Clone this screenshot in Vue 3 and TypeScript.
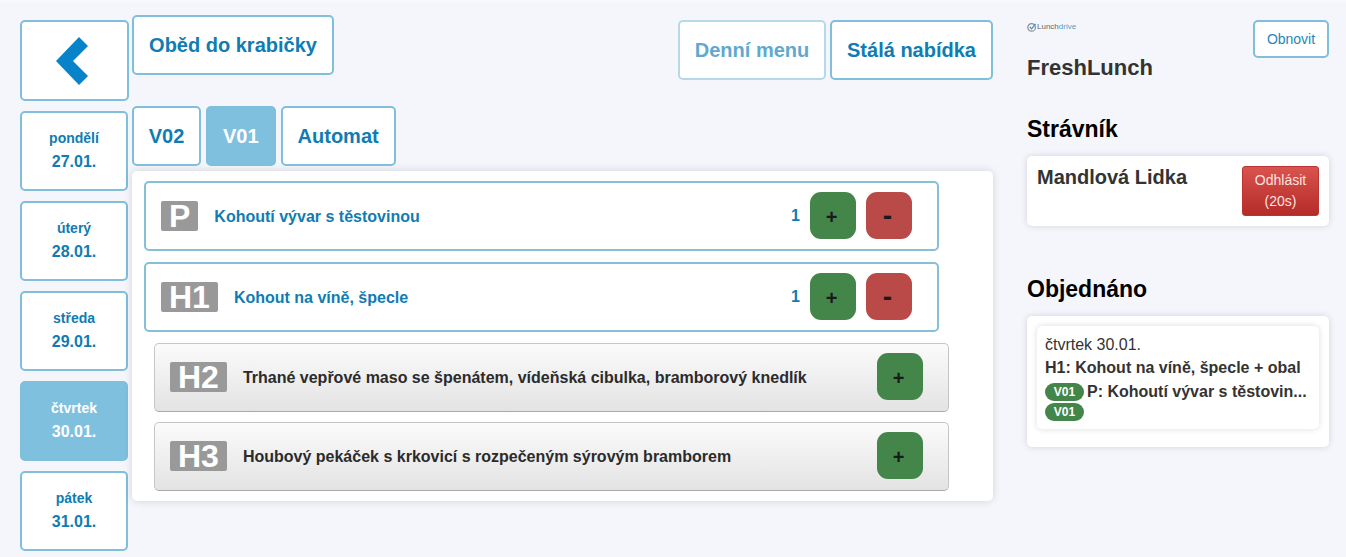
<script setup lang="ts">
const days = [
  { name: 'pondělí', date: '27.01.', active: false },
  { name: 'úterý', date: '28.01.', active: false },
  { name: 'středa', date: '29.01.', active: false },
  { name: 'čtvrtek', date: '30.01.', active: true },
  { name: 'pátek', date: '31.01.', active: false },
];

const tabs = [
  { name: 'V02', active: false },
  { name: 'V01', active: true },
  { name: 'Automat', active: false },
];

const ordered = [
  { code: 'P', text: 'Kohoutí vývar s těstovinou', count: 1 },
  { code: 'H1', text: 'Kohout na víně, špecle', count: 1 },
];

const available = [
  { code: 'H2', text: 'Trhané vepřové maso se špenátem, vídeňská cibulka, bramborový knedlík' },
  { code: 'H3', text: 'Houbový pekáček s krkovicí s rozpečeným sýrovým bramborem' },
];
</script>

<template>
  <div class="page">
    <aside class="days">
      <button class="box back">
        <svg class="chevron" width="32" height="48" viewBox="0 0 32 48">
          <path d="M23 0 L32 9 L17 24 L32 39 L23 48 L0 24 Z" fill="#0784c9" />
        </svg>
      </button>
      <button v-for="d in days" :key="d.date" class="box day" :class="{ active: d.active }">
        <span class="day-name">{{ d.name }}</span>
        <span class="day-date">{{ d.date }}</span>
      </button>
    </aside>

    <main class="main">
      <div class="top">
        <button class="box big lunchbox">Oběd do krabičky</button>
        <div class="menus">
          <button class="box big faded">Denní menu</button>
          <button class="box big">Stálá nabídka</button>
        </div>
      </div>
      <div class="tabs">
        <button v-for="t in tabs" :key="t.name" class="box big tab" :class="{ active: t.active }">{{ t.name }}</button>
      </div>
      <section class="card">
        <div v-for="o in ordered" :key="o.code" class="item">
          <span class="code">{{ o.code }}</span>
          <span class="item-text">{{ o.text }}</span>
          <span class="count">{{ o.count }}</span>
          <button class="act plus">+</button>
          <button class="act minus">-</button>
        </div>
        <div v-for="a in available" :key="a.code" class="item free">
          <span class="code">{{ a.code }}</span>
          <span class="item-text">{{ a.text }}</span>
          <button class="act plus">+</button>
        </div>
      </section>
    </main>

    <aside class="side">
      <div class="side-head">
        <div>
          <div class="logo">
            <svg width="10" height="10" viewBox="0 0 10 10">
              <circle cx="4.6" cy="5.4" r="3.8" fill="none" stroke="#8a8f94" stroke-width="1.2" />
              <path d="M2.8 5 L4.6 6.8 L8.6 1.8" fill="none" stroke="#4a90b8" stroke-width="1.2" />
            </svg>
            <span class="logo-a">Lunch</span><span class="logo-b">drive</span>
          </div>
          <div class="brand">FreshLunch</div>
        </div>
        <button class="refresh">Obnovit</button>
      </div>

      <h2 class="title diner-title">Strávník</h2>
      <div class="panel diner">
        <span class="diner-name">Mandlová Lidka</span>
        <button class="logout">Odhlásit<br />(20s)</button>
      </div>

      <h2 class="title order-title">Objednáno</h2>
      <div class="panel orders">
        <div class="order">
          <div class="order-day">čtvrtek 30.01.</div>
          <div class="order-line">H1: Kohout na víně, špecle + obal</div>
          <div class="order-line"><span class="pill">V01</span>P: Kohoutí vývar s těstovin...</div>
          <div class="pill-row"><span class="pill">V01</span></div>
        </div>
      </div>
    </aside>
  </div>
</template>

<style>
html,
body {
  margin: 0;
  background: #f4f6fb;
}
</style>

<style scoped>
.page {
  display: flex;
  height: 557px;
  box-sizing: border-box;
  overflow: hidden;
  font-family: "Liberation Sans", Arial, sans-serif;
  background: #f4f6fb;
  border-top: 2px solid #f8f9fb;
}

button {
  font-family: inherit;
  cursor: pointer;
}

.box {
  box-sizing: border-box;
  border: 2px solid #7fbfdc;
  border-radius: 5px;
  background: #fff;
  color: #0f7cb3;
  font-weight: 700;
  padding: 0;
  flex-shrink: 0;
}

.box.active {
  background: #7fc0de;
  color: #fff;
}

.days {
  width: 109px;
  margin-left: 20px;
  padding-top: 18px;
  display: flex;
  flex-direction: column;
  flex-shrink: 0;
}

.back {
  height: 81px;
  display: flex;
  align-items: center;
  justify-content: center;
  margin-bottom: 10px;
}

.chevron {
  margin-right: 5px;
}

.day {
  width: 108px;
  height: 80px;
  margin-bottom: 10px;
  display: flex;
  flex-direction: column;
  align-items: center;
  justify-content: center;
  gap: 7px;
  padding: 1px 0 2px;
}

.day-name {
  font-size: 14px;
  line-height: 16px;
}

.day-date {
  font-size: 16px;
  line-height: 18px;
}

.main {
  width: 861px;
  margin-left: 3px;
  padding-top: 13px;
  flex-shrink: 0;
}

.top {
  display: flex;
  justify-content: space-between;
  align-items: flex-start;
  height: 91px;
}

.big {
  height: 60px;
  font-size: 20px;
  padding: 0;
  white-space: nowrap;
}

.lunchbox {
  width: 202px;
}

.menus {
  display: flex;
  gap: 4px;
  margin-top: 5px;
}

.faded {
  color: #5fa9cf;
  border-color: #b5d9ea;
  width: 148px;
}

.menus .big:last-child {
  width: 163px;
}

.tabs {
  display: flex;
  gap: 5px;
}

.tab {
  padding: 0 15px;
}

.tab:first-child {
  padding: 0 14.7px;
}

.card {
  margin-top: 5px;
  background: #fff;
  border-radius: 5px;
  box-shadow: 0 0 8px rgba(0, 0, 0, 0.14);
  padding: 10px 0 10px 12px;
  height: 330px;
  box-sizing: border-box;
}

.item {
  box-sizing: border-box;
  width: 795px;
  height: 70px;
  border: 2px solid #86bfd8;
  border-radius: 5px;
  display: flex;
  align-items: center;
  padding-left: 15px;
  margin-bottom: 11px;
  color: #0f7cb3;
  font-weight: 700;
}

.free {
  height: 69px;
  margin-left: 10px;
  margin-bottom: 10px;
  padding-bottom: 1px;
  border: 1px solid #c6c6c6;
  border-bottom-color: #aaa;
  background: linear-gradient(#fbfbfb, #e3e3e3);
  color: #2b2b2b;
}

.code {
  background: #999;
  color: #fff;
  border-radius: 2px;
  height: 30px;
  line-height: 30px;
  padding: 0 8px;
  font-size: 32px;
  font-weight: 700;
  margin-right: 16px;
  text-align: center;
  flex-shrink: 0;
}

.item-text {
  flex: 1;
  font-size: 16px;
  padding-top: 1px;
}

.count {
  font-size: 16px;
  margin-right: 10px;
}

.act {
  width: 46px;
  height: 47px;
  border: 0;
  border-radius: 11px;
  color: #1a1a1a;
  font-size: 20px;
  font-weight: 700;
  padding: 4px 3px 0 0;
  margin-top: -2px;
}

.plus {
  background: #44864a;
}

.minus {
  background: #b94a48;
  margin-left: 10px;
  margin-right: 25px;
  font-size: 28px;
  padding-top: 2px;
}

.free .act {
  margin-right: 25px;
  margin-top: -1px;
}

.side {
  width: 302px;
  margin-left: 34px;
  flex-shrink: 0;
}

.side-head {
  display: flex;
  justify-content: space-between;
  padding-top: 18px;
  height: 82px;
}

.logo {
  display: flex;
  align-items: center;
  font-size: 8px;
  height: 13px;
}

.logo-a {
  color: #666;
}

.logo-b {
  color: #5b9cc4;
}

.brand {
  margin-top: 22px;
  font-size: 22px;
  font-weight: 700;
  color: #333;
}

.refresh {
  box-sizing: border-box;
  width: 76px;
  height: 38px;
  border: 2px solid #7fbfdc;
  border-radius: 5px;
  background: #fff;
  color: #2487b8;
  font-size: 14px;
  padding: 0;
}

.title {
  margin: 0;
  font-size: 23px;
  line-height: 26px;
  color: #000;
}

.diner-title {
  margin-top: 14px;
}

.panel {
  background: #fff;
  border-radius: 5px;
  box-shadow: 0 0 7px rgba(0, 0, 0, 0.14);
  box-sizing: border-box;
}

.diner {
  margin-top: 14px;
  height: 70px;
  padding: 10px;
  display: flex;
  justify-content: space-between;
  align-items: flex-start;
}

.diner-name {
  font-size: 20px;
  font-weight: 700;
  color: #333;
  line-height: 24px;
  margin-top: -1px;
}

.logout {
  box-sizing: border-box;
  width: 77px;
  height: 50px;
  border: 1px solid #b33;
  border-radius: 3px;
  background: linear-gradient(#d9534f, #b52b27);
  color: #fbe3e0;
  font-size: 14px;
  line-height: 21px;
  padding: 0;
}

.order-title {
  margin-top: 50px;
}

.orders {
  margin-top: 14px;
  height: 131px;
  padding: 10px;
}

.order {
  height: 103px;
  box-sizing: border-box;
  background: #fff;
  border-radius: 5px;
  box-shadow: 0 0 6px rgba(0, 0, 0, 0.14);
  padding: 7px 8px;
  font-size: 16px;
  color: #333;
}

.order-day {
  line-height: 23px;
}

.order-line {
  line-height: 24px;
  font-weight: 700;
  white-space: nowrap;
}

.pill {
  display: inline-block;
  background: #44864a;
  color: #fff;
  border-radius: 10px;
  font-size: 12px;
  font-weight: 700;
  line-height: 18px;
  width: 39px;
  text-align: center;
  vertical-align: 1px;
  margin-right: 3px;
}

.pill-row {
  line-height: 18px;
  height: 18px;
  margin-top: -1px;
}
</style>
